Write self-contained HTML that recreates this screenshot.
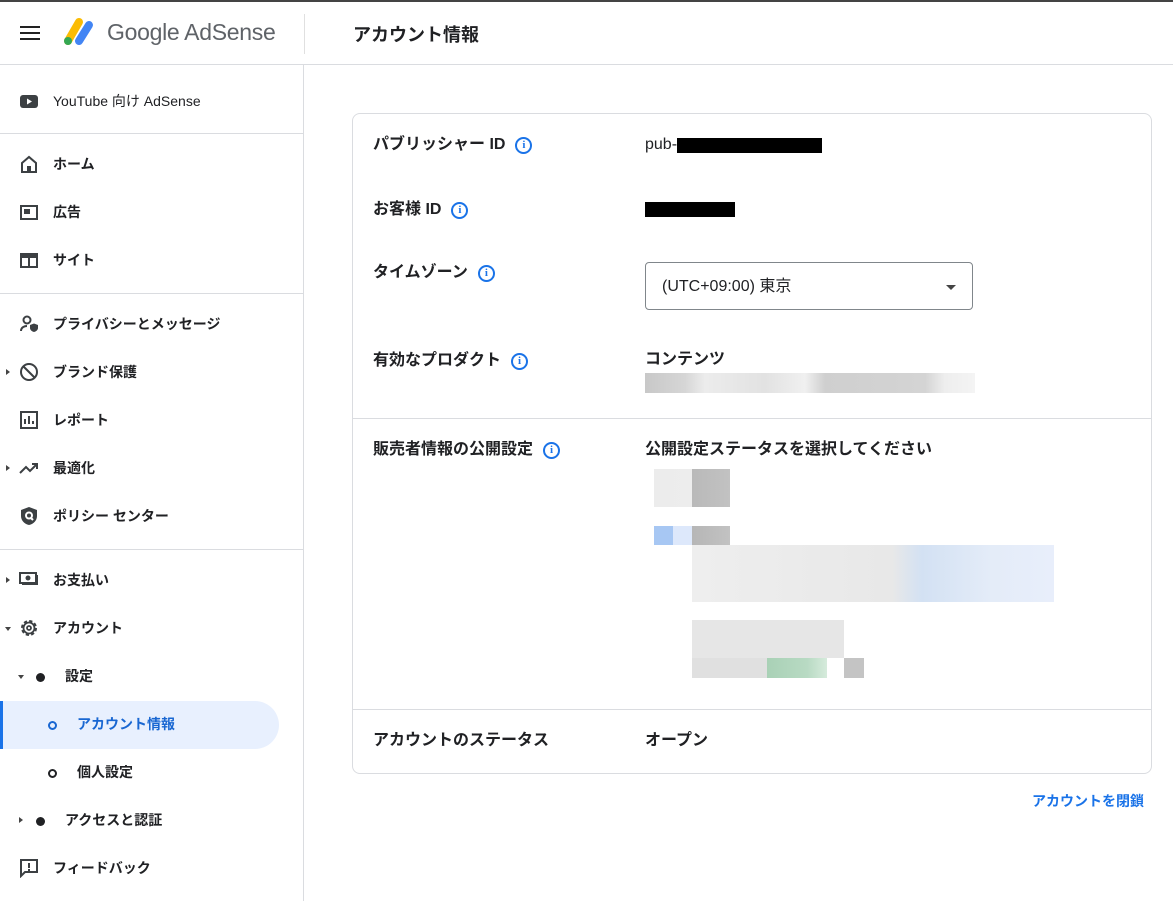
<!DOCTYPE html>
<html><head><meta charset="utf-8"><style>
*{box-sizing:border-box;margin:0;padding:0}
body{width:1173px;height:901px;overflow:hidden;background:#fff;font-family:"Liberation Sans","Noto Sans CJK JP",sans-serif;color:#202124;position:relative}
.topline{position:absolute;left:0;top:0;width:1173px;height:2px;background:#444}
.hdr{position:absolute;left:0;top:2px;width:1173px;height:63px;border-bottom:1px solid #dadce0}
.side{position:absolute;left:0;top:65px;width:304px;height:836px;border-right:1px solid #dadce0}
.it{position:absolute;left:0;width:303px;height:40px;display:flex;align-items:center;font-size:14px;font-weight:bold;color:#202124}
.it svg{position:absolute;left:19px}
.it span{position:absolute;left:53px}
.div{position:absolute;left:0;width:303px;height:1px;background:#dadce0}
.arr{position:absolute;left:6px;width:0;height:0;border-top:3px solid transparent;border-bottom:3px solid transparent;border-left:4px solid #444}
.arrd{position:absolute;width:0;height:0;border-left:3px solid transparent;border-right:3px solid transparent;border-top:4px solid #444}
.card{position:absolute;left:352px;top:113px;width:800px;height:661px;border:1px solid #dadce0;border-radius:8px}
.lab{position:absolute;left:373px;font-size:16px;font-weight:bold;color:#202124;line-height:20px;display:flex;align-items:center}
.val{position:absolute;left:645px;font-size:16px;color:#202124;line-height:20px}
.info{display:inline-block;width:17px;height:17px;border:2px solid #1a73e8;border-radius:50%;color:#1a73e8;font-size:11px;font-weight:bold;text-align:center;line-height:13px;margin-left:10px;font-family:"Liberation Serif",serif}
.b{position:absolute}
</style></head><body>
<div class="topline"></div>
<div class="hdr">
 <svg style="position:absolute;left:20px;top:24px" width="20" height="14"><rect y="0" width="20" height="2" fill="#222"/><rect y="6" width="20" height="2" fill="#222"/><rect y="12" width="20" height="2" fill="#222"/></svg>
 <svg style="position:absolute;left:61px;top:14px" width="36" height="32"><line x1="7" y1="25" x2="18" y2="6" stroke="#fbbc04" stroke-width="8" stroke-linecap="round"/><circle cx="7" cy="25" r="4" fill="#34a853"/><line x1="18" y1="25" x2="28" y2="9" stroke="#4285f4" stroke-width="8" stroke-linecap="round"/></svg>
 <div style="position:absolute;left:107px;top:17px;font-size:23px;color:#5f6368;letter-spacing:-0.3px">Google AdSense</div>
 <div style="position:absolute;left:304px;top:12px;width:1px;height:40px;background:#e0e0e0"></div>
 <div style="position:absolute;left:353px;top:19px;font-size:18px;font-weight:bold">アカウント情報</div>
</div>
<div class="side">
 <div class="it" style="top:16px"><svg width="20" height="20"><rect x="1" y="4" width="18" height="13" rx="3" fill="#3c4043"/><path d="M8 7.5v6l5-3z" fill="#fff"/></svg><span style="font-weight:normal">YouTube 向け AdSense</span></div>
 <div class="div" style="top:68px"></div>
 <div class="it" style="top:79px"><svg width="20" height="20"><path d="M3 9l7-6 7 6v9H3z" fill="none" stroke="#3c4043" stroke-width="2"/><rect x="8" y="12" width="4" height="6" fill="#3c4043"/></svg><span>ホーム</span></div>
 <div class="it" style="top:127px"><svg width="20" height="20"><rect x="2" y="4" width="16" height="13" fill="none" stroke="#3c4043" stroke-width="2"/><rect x="5" y="7" width="6" height="5" fill="#3c4043"/></svg><span>広告</span></div>
 <div class="it" style="top:175px"><svg width="20" height="20"><rect x="2" y="4" width="16" height="13" fill="none" stroke="#3c4043" stroke-width="2"/><rect x="2" y="4" width="16" height="4" fill="#3c4043"/><rect x="9" y="8" width="2" height="9" fill="#3c4043"/></svg><span>サイト</span></div>
 <div class="div" style="top:228px"></div>
 <div class="it" style="top:239px"><svg width="20" height="20"><circle cx="8" cy="6" r="3.5" fill="none" stroke="#3c4043" stroke-width="2"/><path d="M2 17c0-4 4-5 6-5" fill="none" stroke="#3c4043" stroke-width="2"/><path d="M11 11l4-1.5 4 1.5v3c0 2-2 3.5-4 4-2-.5-4-2-4-4z" fill="#3c4043"/></svg><span>プライバシーとメッセージ</span></div>
 <div class="arr" style="top:304px"></div>
 <div class="it" style="top:287px"><svg width="20" height="20"><circle cx="10" cy="10" r="8" fill="none" stroke="#3c4043" stroke-width="2"/><line x1="4.5" y1="4.5" x2="15.5" y2="15.5" stroke="#3c4043" stroke-width="2"/></svg><span>ブランド保護</span></div>
 <div class="it" style="top:335px"><svg width="20" height="20"><rect x="2" y="2" width="16" height="16" fill="none" stroke="#3c4043" stroke-width="2"/><path d="M6 14V9M10 14V6M14 14v-3" stroke="#3c4043" stroke-width="2"/></svg><span>レポート</span></div>
 <div class="arr" style="top:400px"></div>
 <div class="it" style="top:383px"><svg width="20" height="20"><path d="M1 15l6-6 4 4 7-7M13 6h5v5" fill="none" stroke="#3c4043" stroke-width="2"/></svg><span>最適化</span></div>
 <div class="it" style="top:431px"><svg width="20" height="20"><path d="M10 1l8 3v6c0 4-3 8-8 9-5-1-8-5-8-9V4z" fill="#3c4043"/><circle cx="10" cy="9.5" r="3" fill="none" stroke="#fff" stroke-width="2"/><line x1="12" y1="12" x2="14" y2="14" stroke="#fff" stroke-width="2"/></svg><span>ポリシー センター</span></div>
 <div class="div" style="top:484px"></div>
 <div class="arr" style="top:512px"></div>
 <div class="it" style="top:495px"><svg width="20" height="20"><rect x="3" y="5" width="16" height="10" fill="#3c4043"/><rect x="1" y="3" width="16" height="10" fill="#fff" stroke="#3c4043" stroke-width="2"/><circle cx="9" cy="8" r="2.5" fill="#3c4043"/></svg><span>お支払い</span></div>
 <div class="arrd" style="left:5px;top:562px"></div>
 <div class="it" style="top:543px"><svg width="20" height="20"><circle cx="10" cy="10" r="6.5" fill="none" stroke="#3c4043" stroke-width="3" stroke-dasharray="3 2.1"/><circle cx="10" cy="10" r="5.5" fill="none" stroke="#3c4043" stroke-width="1.8"/><circle cx="10" cy="10" r="2" fill="none" stroke="#3c4043" stroke-width="1.8"/></svg><span>アカウント</span></div>
 <div class="arrd" style="left:18px;top:610px"></div>
 <div style="position:absolute;left:36px;top:608px;width:9px;height:9px;border-radius:50%;background:#202124"></div>
 <div class="it" style="top:591px"><span style="left:65px">設定</span></div>
 <div style="position:absolute;left:0;top:636px;width:279px;height:48px;background:#e8f0fe;border-radius:0 24px 24px 0;border-left:3px solid #1a73e8"></div>
 <div style="position:absolute;left:48px;top:656px;width:9px;height:9px;border-radius:50%;border:2px solid #1967d2"></div>
 <div class="it" style="top:639px;color:#1967d2"><span style="left:77px">アカウント情報</span></div>
 <div style="position:absolute;left:48px;top:704px;width:9px;height:9px;border-radius:50%;border:2px solid #202124"></div>
 <div class="it" style="top:687px"><span style="left:77px">個人設定</span></div>
 <div class="arr" style="top:752px;left:19px"></div>
 <div style="position:absolute;left:36px;top:752px;width:9px;height:9px;border-radius:50%;background:#202124"></div>
 <div class="it" style="top:735px"><span style="left:65px">アクセスと認証</span></div>
 <div class="it" style="top:783px"><svg width="20" height="20"><path d="M2 2h16v12H6l-4 4z" fill="none" stroke="#3c4043" stroke-width="2"/><rect x="9" y="5" width="2" height="5" fill="#3c4043"/><rect x="9" y="11" width="2" height="2" fill="#3c4043"/></svg><span>フィードバック</span></div>
</div>

<div class="card"></div>
<div class="lab" style="top:135px">パブリッシャー ID<span class="info">i</span></div>
<div class="val" style="top:135px">pub-</div>
<div class="b" style="left:677px;top:138px;width:145px;height:15px;background:#000"></div>
<div class="lab" style="top:200px">お客様 ID<span class="info">i</span></div>
<div class="b" style="left:645px;top:202px;width:90px;height:15px;background:#000"></div>
<div class="lab" style="top:263px">タイムゾーン<span class="info">i</span></div>
<div style="position:absolute;left:645px;top:262px;width:328px;height:48px;border:1px solid #80868b;border-radius:4px"></div>
<div class="val" style="left:662px;top:277px">(UTC+09:00) 東京</div>
<div style="position:absolute;left:946px;top:285px;border-left:5px solid transparent;border-right:5px solid transparent;border-top:5px solid #444"></div>
<div class="lab" style="top:351px">有効なプロダクト<span class="info">i</span></div>
<div class="val" style="top:350px;font-weight:bold">コンテンツ</div>
<div class="b" style="left:645px;top:373px;width:330px;height:20px;background:linear-gradient(90deg,#c8c8c8 0,#d6d6d6 40px,#ececec 60px,#e2e2e2 120px,#f0f0f0 160px,#cfcfcf 180px,#d4d4d4 280px,#eee 300px,#f4f4f4 330px)"></div>
<div class="b" style="left:353px;top:418px;width:798px;height:1px;background:#dadce0"></div>
<div class="lab" style="top:440px">販売者情報の公開設定<span class="info">i</span></div>
<div class="val" style="top:440px;font-weight:bold">公開設定ステータスを選択してください</div>
<div class="b" style="left:654px;top:469px;width:76px;height:38px;background:linear-gradient(90deg,#ececec 0,#ededed 38px,#b9b9b9 38px,#c2c2c2 76px)"></div>
<div class="b" style="left:654px;top:526px;width:76px;height:19px;background:linear-gradient(90deg,#a7c7f3 0,#a7c7f3 19px,#dde8fb 19px,#dde8fb 38px,#b6b6b6 38px,#c2c2c2 76px)"></div>
<div class="b" style="left:692px;top:545px;width:362px;height:57px;background:linear-gradient(90deg,#eee 0,#e8e8e8 200px,#d3e1f3 230px,#e4ecf8 300px,#e8eefb 362px)"></div>
<div class="b" style="left:692px;top:620px;width:152px;height:38px;background:#e6e6e6"></div>
<div class="b" style="left:692px;top:658px;width:172px;height:20px;background:linear-gradient(90deg,#e0e0e0 0,#e0e0e0 75px,#a9d1b6 75px,#b8dac3 115px,#d6ebdc 135px,#fff 135px,#fff 152px,#c4c4c4 152px)"></div>
<div class="b" style="left:353px;top:709px;width:798px;height:1px;background:#dadce0"></div>
<div class="lab" style="top:731px">アカウントのステータス</div>
<div class="val" style="top:731px;font-weight:bold">オープン</div>
<div style="position:absolute;left:1032px;top:791px;font-size:14px;font-weight:bold;color:#1a73e8">アカウントを閉鎖</div>
</body></html>
